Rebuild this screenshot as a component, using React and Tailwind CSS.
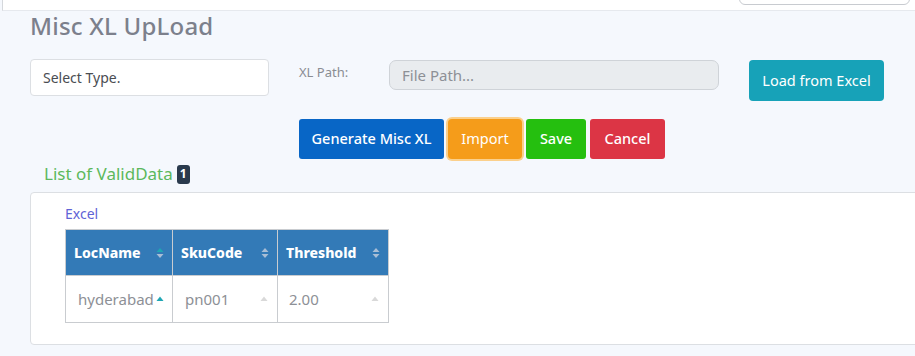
import React from "react";

function SortIcon({ up = "#a9bed6", down = "#a9bed6" }) {
  return (
    <svg width="8" height="12" viewBox="0 0 8 12" className="shrink-0">
      <path d="M4 1 L7.5 5 L0.5 5 Z" fill={up} />
      <path d="M4 11 L7.5 7 L0.5 7 Z" fill={down} />
    </svg>
  );
}

function UpIcon({ color = "#d9d9d9" }) {
  return (
    <svg width="8" height="6" viewBox="0 0 8 6" className="shrink-0">
      <path d="M4 0.5 L7.5 5 L0.5 5 Z" fill={color} />
    </svg>
  );
}

export default function App() {
  return (
    <div className="w-[915px] h-[356px] overflow-hidden bg-[#f5f8fd] font-['Noto_Sans',sans-serif]">
      {/* top bar */}
      <div className="relative h-[11px] bg-white border-b border-[#e6e9ee] border-l border-l-[#d5d8dc] ml-[2px]">
        <div className="absolute left-[736px] top-[-10px] w-[171px] h-[15px] border border-[#c8cbd0] rounded-[6px]" />
      </div>

      <div className="pl-[30px]">
        <h1 className="text-[24px] leading-[28px] font-medium text-[#7c808c] mt-[1px] tracking-[0.2px]">Misc XL UpLoad</h1>

        {/* row 1 */}
        <div className="flex items-start mt-[20px] h-[40px]">
          <div className="w-[239px] h-[37px] mt-[-1px] bg-white border border-[#dcdfe3] rounded-[4px] flex items-center pl-[12px] text-[14px] text-[#4a4d52]">
            Select Type.
          </div>
          <div className="ml-[30px] mt-[3px] w-[90px] text-[13px] text-[#8a8d93]">XL Path:</div>
          <div className="w-[330px] h-[30px] bg-[#e9ecef] border border-[#cfd3d8] rounded-[7px] flex items-center pl-[12px] text-[15px] text-[#8d9096]">
            File Path...
          </div>
          <button className="ml-[30px] w-[135px] h-[41px] bg-[#17a2b8] rounded-[4px] text-white text-[14.5px]">
            Load from Excel
          </button>
        </div>

        {/* row 2 */}
        <div className="flex gap-[4px] mt-[19px] ml-[269px] h-[40px] items-center">
          <button className="w-[145px] h-[40px] bg-[#0866c6] rounded-[3px] text-white text-[14.5px] font-medium">Generate Misc XL</button>
          <button className="w-[74px] h-[40px] bg-[#f59c1a] rounded-[4px] text-white text-[14.5px] ring-2 ring-[#fbd08c]">Import</button>
          <button className="w-[60px] h-[40px] bg-[#25bf0f] rounded-[3px] text-white text-[14.5px] font-medium">Save</button>
          <button className="w-[75px] h-[40px] bg-[#dc3545] rounded-[3px] text-white text-[14.5px] font-medium">Cancel</button>
        </div>

        {/* list title */}
        <div className="flex items-center gap-[4px] ml-[14px] mt-[4px] h-[22px]">
          <span className="text-[17px] leading-[22px] text-[#5cb85c]">List of ValidData</span>
          <span className="bg-[#2a3a4d] text-white text-[12px] font-bold rounded-[3px] w-[13px] h-[19px] flex items-center justify-center">1</span>
        </div>

        {/* card */}
        <div className="mt-[7px] w-[900px] h-[153px] bg-white border border-[#dcdfe3] rounded-[4px] pl-[34px] pt-[12px]">
          <div className="text-[14px] text-[#5f63d6] leading-[18px]">Excel</div>
          <table className="mt-[6px] border-collapse text-[14px]">
            <thead>
              <tr className="bg-[#337ab7] text-white h-[46px]">
                <th className="w-[107px] border border-[#c9ccd0] pl-[8px] pr-[8px] text-left font-extrabold">
                  <div className="flex items-center justify-between">LocName <SortIcon up="#1fa6b4" /></div>
                </th>
                <th className="w-[105px] border border-[#c9ccd0] pl-[8px] pr-[8px] text-left font-extrabold">
                  <div className="flex items-center justify-between">SkuCode <SortIcon /></div>
                </th>
                <th className="w-[111px] border border-[#c9ccd0] pl-[8px] pr-[8px] text-left font-extrabold">
                  <div className="flex items-center justify-between">Threshold <SortIcon /></div>
                </th>
              </tr>
            </thead>
            <tbody>
              <tr className="h-[47px] text-[#8d9096] text-[15px]">
                <td className="border border-[#c9ccd0] pl-[12px] pr-[3px]">
                  <div className="flex items-center gap-[2px]">hyderabad<UpIcon color="#1fa6b4" /></div>
                </td>
                <td className="border border-[#c9ccd0] pl-[12px] pr-[9px]">
                  <div className="flex items-center justify-between">pn001 <UpIcon /></div>
                </td>
                <td className="border border-[#c9ccd0] pl-[11px] pr-[9px]">
                  <div className="flex items-center justify-between">2.00 <UpIcon /></div>
                </td>
              </tr>
            </tbody>
          </table>
        </div>
      </div>
    </div>
  );
}
